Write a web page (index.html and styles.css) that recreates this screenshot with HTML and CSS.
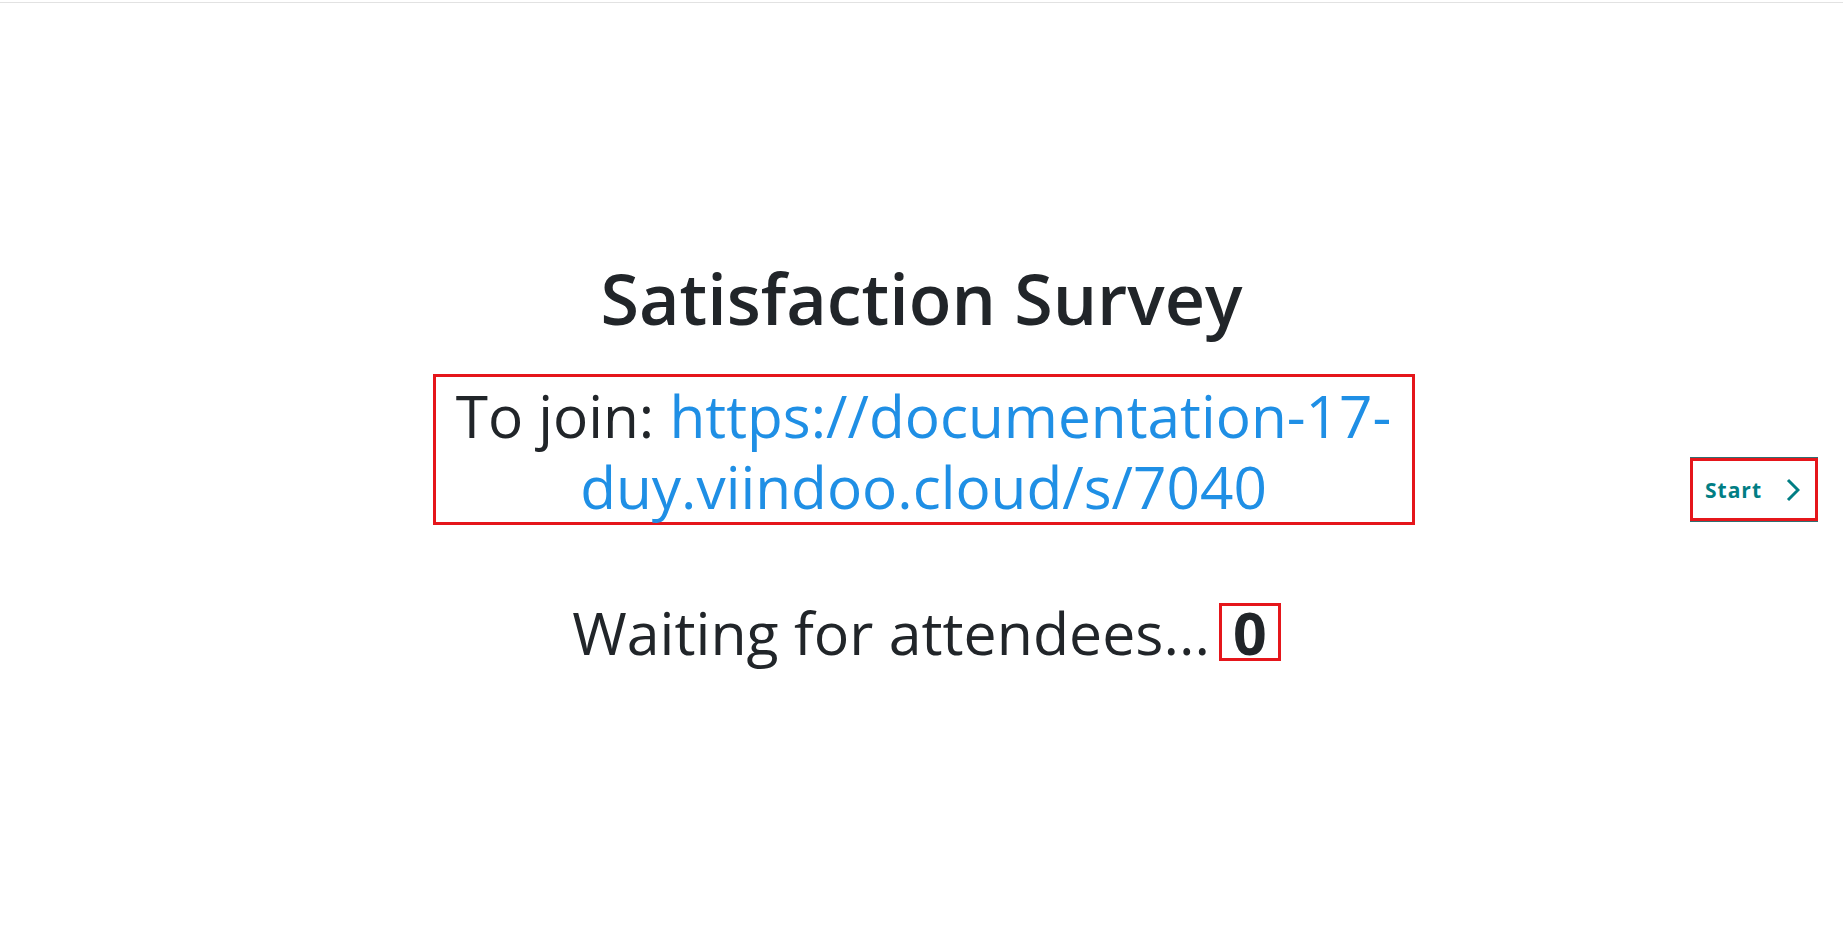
FILE: index.html
```html
<!DOCTYPE html>
<html lang="en">
<head>
<meta charset="utf-8">
<title>Satisfaction Survey</title>
<link rel="stylesheet" href="styles.css">
</head>
<body>
<div class="topline"></div>
<main class="session">
  <h1 class="title">Satisfaction Survey</h1>
  <div class="join">To join: <a class="join-link" href="#">https://documentation-17-duy.viindoo.cloud/s/7040</a></div>
  <div class="waiting">Waiting for attendees...<span class="count">0</span></div>
</main>
<a class="nav-next" href="#">
  <span class="nav-label">Start</span>
  <svg class="chev" width="14" height="24" viewBox="0 0 14 24" aria-hidden="true"><polyline points="2,2 12,12 2,22" fill="none" stroke="#017e84" stroke-width="3"/></svg>
</a>
</body>
</html>
```
FILE: styles.css
```css
html, body {
  margin: 0;
  height: 100%;
}
body {
  font-family: "Open Sans", "Noto Sans", sans-serif;
  color: #212529;
  background: #fff;
  overflow: hidden;
}
.topline {
  height: 3px;
  box-sizing: border-box;
  border-bottom: 1px solid #e2e2e2;
}
.session {
  display: flex;
  flex-direction: column;
  align-items: center;
  justify-content: center;
  height: calc(100vh - 3px);
  padding-bottom: 14px;
  box-sizing: border-box;
}
.title {
  margin: 0 0 34px;
  font-size: 70px;
  line-height: 1.2;
  font-weight: 600;
}
.join {
  width: 976px;
  margin-left: 4px;
  border: 3px solid #e5161b;
  padding: 3px 0 0;
  font-size: 58.5px;
  line-height: 71px;
  text-align: center;
}
.join-link {
  color: #1f8fe5;
  text-decoration: none;
}
.waiting {
  margin-top: 72px;
  padding-left: 10px;
  font-size: 59px;
  line-height: 1.2;
}
.count {
  display: inline-block;
  margin-left: 9px;
  padding: 0 11px;
  border: 3px solid #e5161b;
  font-weight: 700;
  line-height: 52px;
}
.nav-next {
  position: absolute;
  top: 458px;
  right: 25px;
  width: 128px;
  height: 63px;
  box-sizing: border-box;
  border: 3px solid #e5161b;
  box-shadow: 0 -1px 0 #2f6f72, 0 1px 0 #2f6f72;
  display: flex;
  align-items: center;
  gap: 24px;
  padding-left: 12px;
  color: #017e84;
  text-decoration: none;
  font-size: 21px;
  font-weight: 700;
  letter-spacing: 1px;
}
.chev {
  display: block;
}
```
